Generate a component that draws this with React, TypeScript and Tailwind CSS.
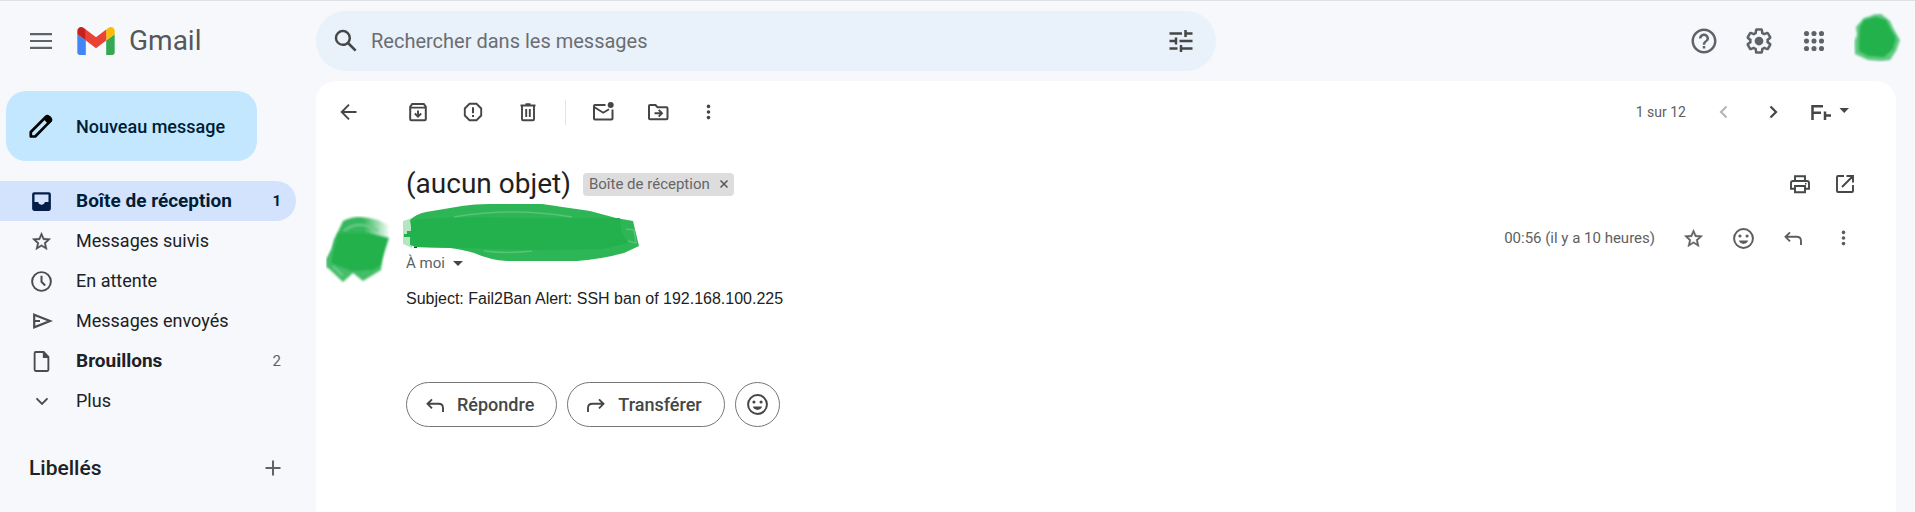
import React from "react";

type IconProps = { size?: number; className?: string; children: React.ReactNode };

function Glyph({ size = 24, className = "", children }: IconProps) {
  return (
    <svg width={size} height={size} viewBox="0 0 24 24" fill="currentColor" aria-hidden="true" className={`shrink-0 ${className}`}>
      {children}
    </svg>
  );
}

function Line({ size = 24, className = "", children }: IconProps) {
  return (
    <svg width={size} height={size} viewBox="0 0 24 24" fill="none" stroke="currentColor" strokeWidth={1.9} aria-hidden="true" className={`shrink-0 ${className}`}>
      {children}
    </svg>
  );
}

function IconButton({ label, className = "", children }: { label: string; className?: string; children: React.ReactNode }) {
  return (
    <button type="button" aria-label={label} className={`flex size-10 shrink-0 items-center justify-center rounded-full ${className}`}>
      {children}
    </button>
  );
}

const MoreIcon = () => (
  <Glyph>
    <circle cx="12.5" cy="6.4" r="1.8" />
    <circle cx="12.5" cy="12" r="1.8" />
    <circle cx="12.5" cy="17.6" r="1.8" />
  </Glyph>
);

const StarIcon = () => (
  <Glyph size={23}>
    <path
      stroke="currentColor"
      strokeWidth="0.5"
      d="M21.5 9.24l-6.890-.62L12 2.500 9.390 8.630 2.500 9.240l5.160 4.730L6.120 20.600 12 17.070 17.880 20.600l-1.530-6.630L21.500 9.240zM12 15.400l-3.760 2.270 1-4.280-3.320-2.880 4.380-.38L12 6.100l1.710 4.040 4.380.38-3.320 2.880 1 4.280L12 15.400z"
    />
  </Glyph>
);

const SmileIcon = () => (
  <Glyph size={25}>
    <path d="M12 2a10 10 0 1 0 0 20 10 10 0 0 0 0-20zm0 18.100a8.100 8.100 0 1 1 0-16.200 8.100 8.100 0 0 1 0 16.200z" />
    <circle cx="8.6" cy="9.6" r="1.5" />
    <circle cx="15.4" cy="9.6" r="1.5" />
    <path d="M7.600 14h8.800c-.6 2-2.300 3.200-4.400 3.200S8.200 16 7.600 14z" />
  </Glyph>
);

const ReplyIcon = ({ className = "" }: { className?: string }) => (
  <Line className={className}>
    <path d="M9 6.300L4.500 10.800 9 15.300M4.700 10.800H15.500C18.500 10.800 20 12.500 20 15V19" />
  </Line>
);

const GmailMark = () => (
  <svg width="38" height="28" viewBox="52 42 88 66" aria-hidden="true" className="shrink-0">
    <path fill="#4285f4" d="M58 108h14V74L52 59v43c0 3.320 2.690 6 6 6" />
    <path fill="#34a853" d="M120 108h14c3.320 0 6-2.690 6-6V59l-20 15" />
    <path fill="#fbbc04" d="M120 48v26l20-15v-8c0-7.420-8.470-11.650-14.400-7.200" />
    <path fill="#ea4335" d="M72 74V48l24 18 24-18v26L96 92" />
    <path fill="#c5221f" d="M52 51v8l20 15V48l-5.600-4.200c-5.940-4.450-14.400-.22-14.400 7.200" />
  </svg>
);

const InboxIcon = () => (
  <Glyph size={25}>
    <path d="M5 3h14a2 2 0 0 1 2 2v14a2 2 0 0 1-2 2H5a2 2 0 0 1-2-2V5a2 2 0 0 1 2-2zm.3 2.300V12.500H8.800c.4 1.600 1.600 2.600 3.200 2.600s2.800-1 3.200-2.600H18.700V5.300z" />
  </Glyph>
);

const ClockIcon = () => (
  <Line size={25}>
    <circle cx="12" cy="12" r="9" />
    <path d="M12 6.500V12.300L15.500 15.800" />
  </Line>
);

const SendIcon = () => (
  <Line>
    <path strokeWidth="2.200" d="M4.200 5.700L20 12 4.200 18.300z" />
    <path strokeWidth="2" d="M4 12H10" />
  </Line>
);

const DraftIcon = () => (
  <Glyph size={25}>
    <path d="M14.500 2H6.500a2 2 0 0 0-2 2v16a2 2 0 0 0 2 2h11a2 2 0 0 0 2-2V7.200zm3.200 18.200H6.300V3.800h7V8.600h4.400z" />
  </Glyph>
);

const ChevronDown = () => (
  <Line>
    <path d="M6.500 9.300L12 14.800l5.500-5.500" />
  </Line>
);

function NavItem({ icon, label, count, bold, active }: { icon: React.ReactNode; label: string; count?: string; bold?: boolean; active?: boolean }) {
  return (
    <li>
      <a
        href="#"
        className={`mr-5 flex h-10 items-center rounded-r-full pr-[15px] pl-[29px] ${active ? "bg-[#d3e3fd] text-[#001d35]" : "text-[#202124]"}`}
      >
        <span className={`flex w-[25px] justify-center ${active ? "text-[#041e49]" : "text-[#4a4b4c]"}`}>{icon}</span>
        <span className={`ml-[22px] grow leading-6 ${bold ? "text-[19px] font-bold" : "text-[18px]"}`}>{label}</span>
        {count && <span className={`text-[15px] ${active ? "font-bold" : "text-[#5f6368]"}`}>{count}</span>}
      </a>
    </li>
  );
}

function Header() {
  return (
    <header className="flex h-[81px] items-center border-t border-[#dfe1e3]">
      <div className="flex w-[316px] shrink-0 items-center pl-[21px]">
        <IconButton label="Menu principal" className="text-[#5f6368]">
          <svg width="22" height="16" viewBox="0 0 22 16" stroke="currentColor" strokeWidth="2.200" aria-hidden="true">
            <path d="M0 1.200h22M0 8h22M0 14.800h22" />
          </svg>
        </IconButton>
        <a href="#" className="ml-4 flex items-center gap-3.5 text-[28px] leading-8 text-[#55585b]">
          <GmailMark />
          Gmail
        </a>
      </div>
      <form role="search" className="flex h-[60px] max-w-[900px] grow items-center rounded-full bg-[#e9f1fb] pr-[15px] pl-2.5 text-[#444746]">
        <IconButton label="Rechercher">
          <Glyph size={30}>
            <path d="M20.490 19l-5.730-5.730C15.530 12.200 16 10.910 16 9.500A6.500 6.500 0 1 0 9.500 16c1.410 0 2.700-.47 3.770-1.240L19 20.490 20.490 19zM5 9.500C5 7.010 7.010 5 9.500 5S14 7.010 14 9.500 11.990 14 9.500 14 5 11.990 5 9.500z" />
          </Glyph>
        </IconButton>
        <input
          type="text"
          aria-label="Rechercher dans les messages"
          placeholder="Rechercher dans les messages"
          className="ml-[5px] min-w-0 grow bg-transparent text-[20px] leading-7 outline-none placeholder:text-[#6b6e71]"
        />
        <IconButton label="Options de recherche">
          <svg width="24" height="24" viewBox="0 0 24 24" fill="none" stroke="currentColor" strokeWidth="2.500" aria-hidden="true">
            <path d="M.5 4.500H13M16.500 1v7M16.500 4.500H23.500M.5 12H7M7 8.500v7M10.500 12H23.500M.5 19.500H8.500M12 16v7M12 19.500H23.500" />
          </svg>
        </IconButton>
      </form>
      <div className="ml-auto flex items-center gap-[15px] pr-3.5 text-[#5f6368]">
        <IconButton label="Assistance">
          <Glyph size={30}>
            <path d="M11 18h2v-2h-2v2zm1-16C6.480 2 2 6.480 2 12s4.480 10 10 10 10-4.480 10-10S17.520 2 12 2zm0 18c-4.410 0-8-3.590-8-8s3.590-8 8-8 8 3.590 8 8-3.590 8-8 8zm0-14c-2.210 0-4 1.790-4 4h2c0-1.100.9-2 2-2s2 .9 2 2c0 2-3 1.750-3 5h2c0-2.250 3-2.500 3-5 0-2.210-1.790-4-4-4z" />
          </Glyph>
        </IconButton>
        <IconButton label="Paramètres">
          <Glyph size={30}>
            <path d="M13.85 22.25h-3.7c-.74 0-1.36-.54-1.45-1.27l-.27-1.89c-.27-.14-.53-.29-.79-.46l-1.8.72c-.7.26-1.47-.03-1.81-.65L2.2 15.53c-.35-.66-.2-1.44.36-1.88l1.53-1.19c-.01-.15-.02-.3-.02-.46 0-.15.01-.31.02-.46l-1.52-1.19c-.59-.45-.74-1.26-.37-1.88l1.85-3.19c.34-.62 1.11-.9 1.79-.63l1.81.73c.26-.17.52-.32.78-.46l.27-1.91c.09-.7.71-1.25 1.44-1.25h3.7c.74 0 1.36.54 1.45 1.27l.27 1.89c.27.14.53.29.79.46l1.8-.72c.71-.26 1.48.03 1.82.65l1.84 3.18c.36.66.2 1.44-.36 1.88l-1.52 1.19c.01.15.02.3.02.46s-.01.31-.02.46l1.52 1.19c.56.45.72 1.23.37 1.86l-1.86 3.22c-.34.62-1.11.9-1.8.63l-1.8-.72c-.26.17-.52.32-.78.46l-.27 1.91c-.1.68-.72 1.22-1.46 1.22zm-3.23-2h2.76l.37-2.55.53-.22c.44-.18.88-.44 1.34-.78l.45-.34 2.38.96 1.38-2.4-2.03-1.58.07-.56c.03-.26.06-.51.06-.78s-.03-.53-.06-.78l-.07-.56 2.03-1.58-1.39-2.4-2.39.96-.45-.35c-.42-.32-.87-.58-1.33-.77l-.52-.22-.37-2.55h-2.76l-.37 2.55-.53.21c-.44.19-.88.44-1.34.79l-.45.33-2.38-.95-1.39 2.39 2.03 1.58-.07.56a7 7 0 0 0-.06.79c0 .26.02.53.06.78l.07.56-2.03 1.58 1.38 2.4 2.39-.96.45.35c.43.33.86.58 1.33.77l.53.22.38 2.55z" />
            <circle cx="12" cy="12" r="3.500" />
          </Glyph>
        </IconButton>
        <IconButton label="Applications Google">
          <Glyph size={30}>
            {[6, 12, 18].map((cy) => [6, 12, 18].map((cx) => <circle key={`${cx}-${cy}`} cx={cx} cy={cy} r="2.050" />))}
          </Glyph>
        </IconButton>
        <button type="button" aria-label="Compte" className="ml-[5px]">
          <svg width="47" height="49" viewBox="0 0 47 49" className="-mt-2" aria-hidden="true">
            <defs>
              <filter id="soft-account" x="-10%" y="-10%" width="120%" height="120%">
                <feGaussianBlur stdDeviation="0.9" />
              </filter>
            </defs>
            <path filter="url(#soft-account)" fill="#5fc980" d="M10 5Q17 3 20 1.500L27 1L36 8L39 15L46 27L42 38L36 47L27 48L14 47L1 41L0.500 28L3 22L2 14z" />
            <path filter="url(#soft-account)" fill="#22b14c" d="M10 7L22 4L32 7L36 15L42 25L39 36L30 44L14 43L5 38L5 27L6 14z" />
          </svg>
        </button>
      </div>
    </header>
  );
}

function Sidebar() {
  return (
    <aside className="w-[316px] shrink-0 pt-2.5">
      <button type="button" className="ml-1.5 flex h-[70px] w-[251px] items-center rounded-[20px] bg-[#c2e7ff] pl-[22px] text-[18px] font-medium text-[#001d35]">
        <svg width="25" height="25" viewBox="0 0 25 25" fill="none" aria-hidden="true">
          <path stroke="#000" strokeWidth="2.700" strokeLinejoin="round" d="M2.800 22.500V18L18 2.800c.8-.8 1.800-.8 2.600 0l1.700 1.700c.8.8.8 1.800 0 2.600L7.200 22.500z" />
          <path fill="#000" d="M15.500 5L18.500 2h3.500l2 2.500v2.500l-3.500 3.500z" />
        </svg>
        <span className="ml-[23px]">Nouveau message</span>
      </button>
      <nav aria-label="Dossiers" className="mt-5">
        <ul>
          <NavItem icon={<InboxIcon />} label="Boîte de réception" count="1" bold active />
          <NavItem icon={<StarIcon />} label="Messages suivis" />
          <NavItem icon={<ClockIcon />} label="En attente" />
          <NavItem icon={<SendIcon />} label="Messages envoyés" />
          <NavItem icon={<DraftIcon />} label="Brouillons" count="2" bold />
          <NavItem icon={<ChevronDown />} label="Plus" />
        </ul>
      </nav>
      <div className="mt-[27px] flex items-center justify-between pr-[23px] pl-[29px]">
        <h2 className="text-[21px] leading-7 font-medium text-[#202124]">Libellés</h2>
        <IconButton label="Créer un libellé" className="text-[#5f6368]">
          <Line>
            <path strokeWidth="2" d="M12 4.500v15M4.500 12h15" />
          </Line>
        </IconButton>
      </div>
    </aside>
  );
}

function Toolbar() {
  return (
    <div role="toolbar" aria-label="Actions" className="flex h-[60px] items-center pt-0.5 pr-[43px] pl-3 text-[#444746]">
      <IconButton label="Retour" className="mr-[30px]">
        <Line>
          <path d="M13 4.700L5.700 12l7.300 7.300M5.900 12H20.500" />
        </Line>
      </IconButton>
      <div className="flex gap-[15px]">
        <IconButton label="Archiver">
          <Line>
            <path strokeWidth="2" d="M4.200 7.500V19.200a1 1 0 0 0 1 1H18.800a1 1 0 0 0 1-1V6.800L17.800 4H6.200L4.200 6.800z" />
            <path d="M4.200 7.600H19.800M12 10.500V16.500M8.800 13.500L12 16.700l3.200-3.200" />
          </Line>
        </IconButton>
        <IconButton label="Signaler comme spam">
          <Line>
            <path d="M8.500 3.800h7L20.200 8.500v7L15.500 20.200h-7L3.800 15.500v-7z" />
            <path strokeWidth="2" d="M12 7.200v6M12 15v2" />
          </Line>
        </IconButton>
        <IconButton label="Supprimer">
          <Line>
            <path d="M6 6V19.200a1 1 0 0 0 1 1H17a1 1 0 0 0 1-1V6M10.200 9v8M13.800 9v8" />
            <path strokeWidth="2" d="M4.500 5.500h15M9.500 4.200h5" />
          </Line>
        </IconButton>
      </div>
      <div className="mx-[17px] h-[25px] w-px bg-[#e3e6e8]" />
      <div className="flex gap-[15px]">
        <IconButton label="Marquer comme non lu">
          <Line>
            <path strokeWidth="2" d="M14.500 5H4a1 1 0 0 0-1 1V18.500a1 1 0 0 0 1 1H20.500a1 1 0 0 0 1-1V9.500" />
            <path d="M3.500 7.200L12.200 12.700 18 9.200" />
            <circle cx="19.700" cy="4.900" r="3" fill="currentColor" stroke="none" />
          </Line>
        </IconButton>
        <IconButton label="Déplacer vers">
          <Line>
            <path strokeWidth="2" d="M3 18.200V6a1 1 0 0 1 1-1H9.500l2 2.200H20.500a1 1 0 0 1 1 1V18.200a1 1 0 0 1-1 1H4a1 1 0 0 1-1-1z" />
            <path d="M8.500 13.200h7M12.700 9.800l3.300 3.400-3.300 3.400" />
          </Line>
        </IconButton>
      </div>
      <IconButton label="Plus d'actions" className="ml-2.5">
        <MoreIcon />
      </IconButton>
      <span className="mr-[18px] ml-auto text-[14px] text-[#5e6063]">1 sur 12</span>
      <IconButton label="Plus récents" className="text-[#b5b7b9]">
        <Line>
          <path strokeWidth="2.200" d="M14.500 6.500L9 12l5.500 5.500" />
        </Line>
      </IconButton>
      <IconButton label="Plus anciens" className="ml-[9px]">
        <Line>
          <path strokeWidth="2.200" d="M9.500 6.500l5.500 5.500-5.500 5.500" />
        </Line>
      </IconButton>
      <button type="button" aria-label="Outils de saisie" className="ml-2.5 flex h-10 w-[50px] items-center justify-end">
        <svg width="38" height="18" viewBox="0 0 38 18" fill="none" stroke="currentColor" aria-hidden="true" className="mr-1">
          <path strokeWidth="2.500" d="M1.500 17V3.200H12M1.500 9.700H10" />
          <path strokeWidth="2.500" d="M14 8.500V17M14 12.500h6" />
          <path fill="currentColor" stroke="none" d="M28.500 5h9.500L33.200 10z" />
        </svg>
      </button>
    </div>
  );
}

function Message() {
  return (
    <article>
      <div className="mt-6 flex h-[38px] items-center pr-[31px] pl-[90px]">
        <h1 className="text-[28px] leading-9 text-[#1f1f1f]">(aucun objet)</h1>
        <div className="ml-3 flex h-[23px] items-center rounded bg-[#dddddd] px-1.5 text-[15px] leading-5 text-[#666666]">
          Boîte de réception
          <button type="button" aria-label="Supprimer le libellé" className="ml-2.5">
            <svg width="8" height="8" viewBox="0 0 8 8" stroke="#555" strokeWidth="1.500" aria-hidden="true">
              <path d="M.5.5l7 7M7.500.5l-7 7" />
            </svg>
          </button>
        </div>
        <div className="ml-auto flex gap-[5px] text-[#444746]">
          <IconButton label="Tout imprimer">
            <Line>
              <path d="M7 16.700H3V11a2 2 0 0 1 2-2H19a2 2 0 0 1 2 2V16.700H17M7 9V4.300H17V9M7 14H17V20.200H7z" />
              <path strokeWidth="1.500" d="M17 11.700h1.500" />
            </Line>
          </IconButton>
          <IconButton label="Nouvelle fenêtre">
            <Line>
              <path d="M11 4H5a1 1 0 0 0-1 1V19a1 1 0 0 0 1 1H19a1 1 0 0 0 1-1V13M13.500 4H20V10.500M20 4L9 15" />
            </Line>
          </IconButton>
        </div>
      </div>

      <div className="flex pl-2.5">
        <svg width="66" height="68" viewBox="0 0 66 68" className="mt-[13px] shrink-0" aria-hidden="true">
          <defs>
            <filter id="soft-avatar" x="-10%" y="-10%" width="120%" height="120%">
              <feGaussianBlur stdDeviation="0.8" />
            </filter>
            <linearGradient id="fade-avatar" x1="0" x2="1">
              <stop offset="0.6" stopColor="#34b75b" />
              <stop offset="1" stopColor="#34b75b" stopOpacity="0.1" />
            </linearGradient>
          </defs>
          <path filter="url(#soft-avatar)" fill="url(#fade-avatar)" d="M17 5Q26 0.500 34 1T52 4L62 9L62 22L50 30L20 40L1 52L1 43L6 34L9 22z" />
          <path filter="url(#soft-avatar)" fill="#45bd68" d="M9 22L58 24L55 54L37 65L27 57L17 66L1 51L1 43L6 32z" />
          <path filter="url(#soft-avatar)" fill="none" stroke="#6fcd8b" strokeWidth="2" d="M18 15Q26 8 36 9T52 15M7 50L17 60" />
          <path filter="url(#soft-avatar)" fill="#22b14c" d="M12 17L42 17L63 22L54 50L46 54L26 55L5 47L8 32z" />
        </svg>
        <div className="ml-2.5 flex flex-col">
          <svg width="240" height="59" viewBox="0 0 240 59" className="-mb-2" role="img" aria-label="Expéditeur masqué">
            <defs>
              <filter id="soft-name" x="-5%" y="-10%" width="110%" height="120%">
                <feGaussianBlur stdDeviation="0.7" />
              </filter>
            </defs>
            <path filter="url(#soft-name)" fill="#b5e5c3" d="M1 18L10 15V45L1 41z" />
            <path filter="url(#soft-name)" fill="#2db555" d="M8 17Q14 11 24 9L60 3Q72 1 88 1H140Q160 4 188 8L214 15L231 18L237 43L222 50Q200 56 175 58H105Q88 57 72 50Q62 47 48 45L12 44z" />
            <path filter="url(#soft-name)" fill="none" stroke="#56c377" strokeWidth="1.5" d="M52 14Q80 9 110 9T170 14M82 48Q105 51 130 48M224 26L232 27L234 40L226 38" />
            <path fill="#22b14c" d="M9 17Q60 13 120 15H218L219 27L226 40L200 46L130 47L60 45L14 44L8 42L8 34H2V31H5V28H9z" />
            <path fill="#1c4a2a" d="M12 44h3v1h-3z" />
          </svg>
          <button type="button" className="flex h-[18px] items-center gap-2 self-start pl-1 text-[15px] leading-[18px] text-[#5e6063]">
            À moi
            <svg width="10" height="5" viewBox="0 0 10 5" fill="#444746" aria-hidden="true">
              <path d="M0 0h10L5 5z" />
            </svg>
          </button>
        </div>
        <div className="ml-auto flex h-[70px] items-center gap-2.5 pr-[33px] text-[#5b5e60]">
          <time className="mr-2 text-[15px] text-[#5e6063]">00:56 (il y a 10 heures)</time>
          <IconButton label="Suivre">
            <StarIcon />
          </IconButton>
          <IconButton label="Ajouter une réaction">
            <SmileIcon />
          </IconButton>
          <IconButton label="Répondre">
            <ReplyIcon />
          </IconButton>
          <IconButton label="Plus">
            <MoreIcon />
          </IconButton>
        </div>
      </div>

      <p className="mt-[5px] pl-[90px] font-['Liberation_Sans',Arial,sans-serif] text-[16px] leading-5 text-[#222222]">
        Subject: Fail2Ban Alert: SSH ban of 192.168.100.225
      </p>

      <div className="mt-[73px] flex gap-2.5 pb-6 pl-[90px] text-[18px] font-medium text-[#444746]">
        <button type="button" className="flex h-[45px] items-center gap-2.5 rounded-full border border-[#747775] pr-[22px] pl-4">
          <ReplyIcon />
          Répondre
        </button>
        <button type="button" className="flex h-[45px] items-center gap-2.5 rounded-full border border-[#747775] pr-[22px] pl-4">
          <ReplyIcon className="-scale-x-100" />
          Transférer
        </button>
        <button type="button" aria-label="Réagir avec un emoji" className="flex size-[45px] items-center justify-center rounded-full border border-[#747775]">
          <SmileIcon />
        </button>
      </div>
    </article>
  );
}

export default function App() {
  return (
    <div className="flex min-h-screen flex-col bg-[#f6f8fc] font-[Roboto,sans-serif]">
      <Header />
      <div className="flex grow">
        <Sidebar />
        <main className="mr-[19px] min-w-0 grow rounded-t-[20px] bg-white">
          <Toolbar />
          <Message />
        </main>
      </div>
    </div>
  );
}
